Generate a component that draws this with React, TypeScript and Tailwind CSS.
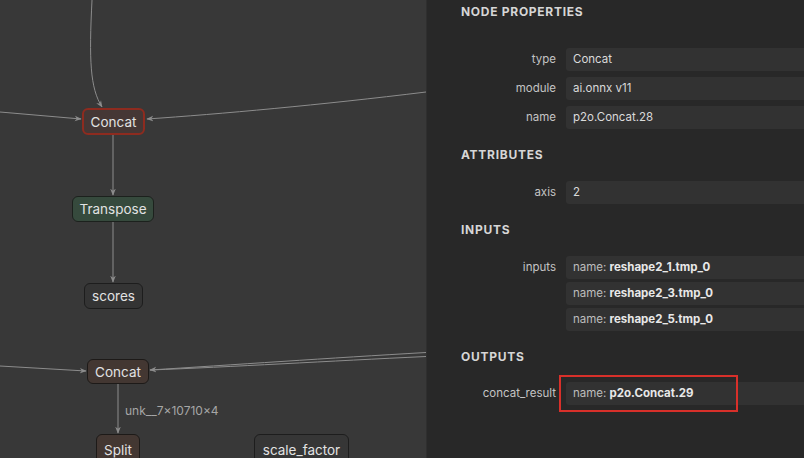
import React from "react";

const font = { fontFamily: "Inter, 'Noto Sans', sans-serif" };

type NodeProps = { x: number; y: number; w: number; h: number; label: string; cls: string };

function GraphNode({ x, y, w, h, label, cls }: NodeProps) {
  return (
    <div
      className={`absolute flex items-center justify-center rounded-[6px] text-[13.5px] text-[#e2e2e2] ${cls}`}
      style={{ left: x, top: y, width: w, height: h }}
    >
      {label}
    </div>
  );
}

function Heading({ children, className = "" }: { children: React.ReactNode; className?: string }) {
  return (
    <div className={`pl-[34px] h-4 leading-4 text-[12px] font-bold tracking-[0.06em] text-[#d6d6d6] ${className}`}>
      {children}
    </div>
  );
}

function Row({ label, children, className = "" }: { label: string; children: React.ReactNode; className?: string }) {
  return (
    <div className={`flex items-start ${className}`}>
      <div className="w-[129px] shrink-0 h-[23px] leading-[23px] text-right text-[11.5px] text-[#c4c4c4]">{label}</div>
      <div className="ml-[10px] flex-1 flex flex-col gap-[3px]">{children}</div>
    </div>
  );
}

function Value({ children }: { children: React.ReactNode }) {
  return (
    <div className="h-[23px] leading-[23px] bg-[#323232] rounded-l-[3px] pl-[7px] text-[11.5px] text-[#dadada] whitespace-nowrap">
      {children}
    </div>
  );
}

function Named({ name }: { name: string }) {
  return (
    <>
      <span className="text-[#bdbdbd]">name: </span>
      <span className="font-bold text-[#e8e8e8]">{name}</span>
    </>
  );
}

export default function App() {
  return (
    <div className="flex w-[804px] h-[458px] overflow-hidden bg-[#383838]" style={font}>
      {/* graph canvas */}
      <div className="relative w-[426px] h-full shrink-0 bg-[#383838]">
        <svg className="absolute inset-0" width={426} height={458}>
          <defs>
            <marker id="arr" viewBox="0 0 10 10" refX="9" refY="5" markerWidth="7" markerHeight="7" orient="auto-start-reverse">
              <path d="M0,1 L10,5 L0,9 L3,5 Z" fill="#8c8c8c" />
            </marker>
          </defs>
          <g stroke="#8c8c8c" strokeWidth="1" fill="none">
            <path d="M92,0 C89,60 90,88 102,107" markerEnd="url(#arr)" />
            <path d="M0,112 L81,119" markerEnd="url(#arr)" />
            <path d="M426,92 C320,105 220,114 147,119" markerEnd="url(#arr)" />
            <path d="M113,135 L113,195" markerEnd="url(#arr)" />
            <path d="M113,222 L113,282" markerEnd="url(#arr)" />
            <path d="M0,366 L86,371" markerEnd="url(#arr)" />
            <path d="M426,352.5 C330,358 230,365 150,370" markerEnd="url(#arr)" />
            <path d="M426,356.5 C330,361 230,367 150,370" />
            <path d="M118,384 L118,433" markerEnd="url(#arr)" />
          </g>
        </svg>
        <GraphNode x={82} y={108} w={63} h={27} label="Concat" cls="bg-[#453735] border-2 border-[#8e2b1f] pt-px" />
        <GraphNode x={72} y={196} w={82} h={26} label="Transpose" cls="bg-[#364a3d] border border-[#1c211d] pt-px" />
        <GraphNode x={84} y={283} w={59} h={26} label="scores" cls="bg-[#343434] border border-[#1d1d1d] pt-px" />
        <GraphNode x={87} y={359} w={62} h={25} label="Concat" cls="bg-[#433732] border border-[#1d1a18] pt-px" />
        <GraphNode x={96} y={434} w={44} h={30} label="Split" cls="bg-[#433732] border border-[#1d1a18] items-start pt-[5px]" />
        <GraphNode x={254} y={434} w={95} h={30} label="scale_factor" cls="bg-[#363636] border border-[#1d1d1d] items-start pt-[5px]" />
        <div className="absolute left-[125px] top-[402px] text-[12px] text-[#a6a6a6]">unk__7×10710×4</div>
      </div>

      {/* properties panel */}
      <div className="flex-1 h-full bg-[#282828] border-l border-[#2f2f2f] pt-1">
        <Heading>NODE PROPERTIES</Heading>
        <div className="mt-[28px] flex flex-col gap-[6px]">
          <Row label="type"><Value>Concat</Value></Row>
          <Row label="module"><Value>ai.onnx v11</Value></Row>
          <Row label="name"><Value>p2o.Concat.28</Value></Row>
        </div>

        <Heading className="mt-[18px]">ATTRIBUTES</Heading>
        <Row label="axis" className="mt-[18px]"><Value>2</Value></Row>

        <Heading className="mt-[18px]">INPUTS</Heading>
        <Row label="inputs" className="mt-[18px]">
          <Value><Named name="reshape2_1.tmp_0" /></Value>
          <Value><Named name="reshape2_3.tmp_0" /></Value>
          <Value><Named name="reshape2_5.tmp_0" /></Value>
        </Row>

        <Heading className="mt-[18px]">OUTPUTS</Heading>
        <Row label="concat_result" className="mt-[17px]">
          <div className="relative">
            <Value><Named name="p2o.Concat.29" /></Value>
            <div className="absolute left-[-7px] top-[-7px] w-[179px] h-[37px] border-2 border-[#d8302a]" />
          </div>
        </Row>
      </div>
    </div>
  );
}
